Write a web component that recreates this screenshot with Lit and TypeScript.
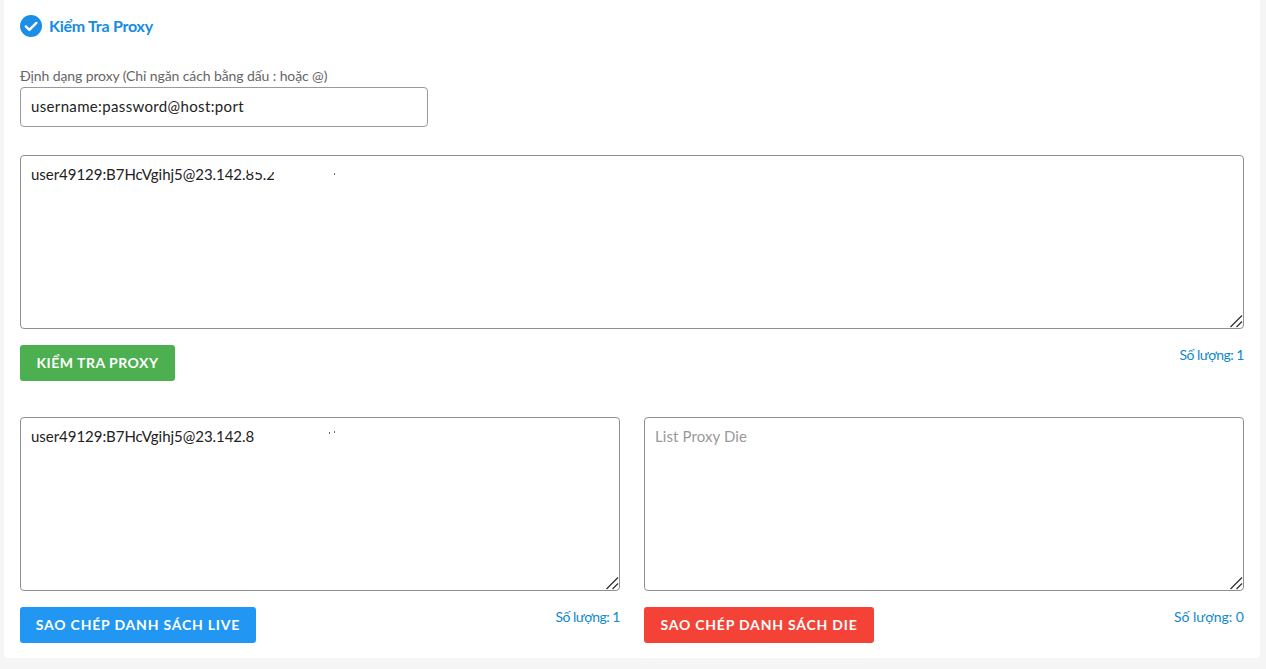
import { LitElement, html, css } from "lit";
import { customElement } from "lit/decorators.js";

const grip = html`<svg class="grip" viewBox="0 0 14 14" aria-hidden="true">
  <path d="M1.5 13L13 1.5M7.5 13L13 7.5" fill="none" stroke="#333" stroke-width="1.3"></path>
</svg>`;

@customElement("app-root")
export class AppRoot extends LitElement {
  static styles = css`
    :host { display: block; background: #f5f5f5; height: 669px; font-family: "Lato", "Noto Sans", sans-serif; }
    * { box-sizing: border-box; }
    .card { margin: 0 6px 0 4px; height: 658px; background: #fff; border-radius: 0 0 4px 4px; padding: 14px 16px 0; }
    .title { display: flex; align-items: center; gap: 7px; height: 22px; margin-top: 1px; color: #138ce4; font-size: 16px; font-weight: 700; letter-spacing: -0.25px; }
    .title svg { width: 22px; height: 22px; flex: none; }
    .title span { position: relative; top: -1px; }
    label { display: block; margin-top: 29px; font-size: 14px; line-height: 20px; color: #666; height: 21px; letter-spacing: -0.1px; }
    .field { display: block; width: 408px; height: 40px; border: 1px solid #9a9a9a; border-radius: 4px; padding: 0 10px 2px; font: 15px "Lato", sans-serif; letter-spacing: 0.35px; color: #222; outline: none; }
    textarea { display: block; width: 100%; height: 174px; border: 1px solid #8f8f8f; border-radius: 4px; padding: 7px 10px; font: 15px/22px "Lato", sans-serif; letter-spacing: -0.04px; color: #222; outline: none; resize: none; }
    textarea::placeholder { color: #999; letter-spacing: 0.1px; }
    .box { position: relative; }
    .grip { position: absolute; right: 1px; bottom: 1px; width: 14px; height: 14px; pointer-events: none; }
    .main { margin-top: 28px; }
    .mask { position: absolute; background: #fff; height: 22px; }
    .speck { position: absolute; width: 1px; height: 2px; background: #666; }
    .actions { display: flex; justify-content: space-between; align-items: flex-start; margin-top: 16px; }
    button { height: 36px; border: 0; border-radius: 3px; padding: 0 0 2px; color: #fff; font: 700 14px "Lato", sans-serif; letter-spacing: 0.8px; text-transform: uppercase; white-space: nowrap; }
    .green { background: #4caf50; width: 155px; letter-spacing: 0.5px; }
    .blue { background: #2196f3; width: 236px; }
    .red { background: #f44336; width: 230px; }
    .count { color: #0f88cf; font-size: 14px; line-height: 20px; letter-spacing: -0.5px; }
    .count.wide { letter-spacing: 0; }
    .columns { display: grid; grid-template-columns: 1fr 1fr; gap: 24px; margin-top: 36px; }
  `;

  render() {
    return html`
      <div class="card">
        <div class="title">
          <svg viewBox="0 0 22 22" aria-hidden="true">
            <circle cx="11" cy="11" r="11" fill="#1b8fe6"></circle>
            <path d="M5.8 11.4l3.6 3.5 7-7" fill="none" stroke="#fff" stroke-width="2.4" stroke-linecap="round" stroke-linejoin="round"></path>
          </svg>
          <span>Kiểm Tra Proxy</span>
        </div>
        <label>Định dạng proxy (Chỉ ngăn cách bằng dấu : hoặc @)</label>
        <input class="field" .value=${"username:password@host:port"} />
        <div class="main">
          <div class="box">
            <textarea .value=${"user49129:B7HcVgihj5@23.142.85.2"}></textarea>
            <span class="mask" style="left:228px;top:7px;width:26px;height:10px"></span>
            <span class="mask" style="left:254px;top:7px;width:60px"></span>
            <span class="speck" style="left:314px;top:18px"></span>
            ${grip}
          </div>
          <div class="actions">
            <button class="green">Kiểm tra proxy</button>
            <span class="count">Số lượng: 1</span>
          </div>
        </div>
        <div class="columns">
          <div>
            <div class="box">
              <textarea .value=${"user49129:B7HcVgihj5@23.142.8"}></textarea>
              <span class="speck" style="left:309px;top:15px"></span>
              <span class="speck" style="left:314px;top:14px"></span>
              ${grip}
            </div>
            <div class="actions">
              <button class="blue">Sao chép danh sách live</button>
              <span class="count">Số lượng: 1</span>
            </div>
          </div>
          <div>
            <div class="box">
              <textarea placeholder="List Proxy Die"></textarea>
              ${grip}
            </div>
            <div class="actions">
              <button class="red">Sao chép danh sách die</button>
              <span class="count wide">Số lượng: 0</span>
            </div>
          </div>
        </div>
      </div>
    `;
  }
}
